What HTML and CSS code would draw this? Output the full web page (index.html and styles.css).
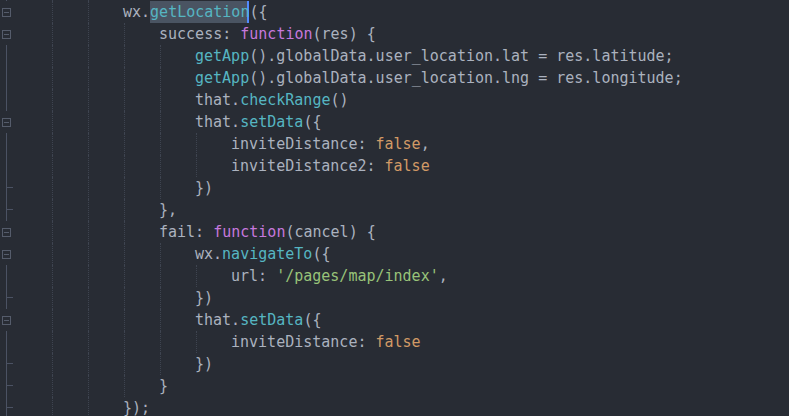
FILE: index.html
```html
<!DOCTYPE html>
<html>
<head>
<meta charset="utf-8">
<link rel="stylesheet" href="styles.css">
</head>
<body>
<div class="editor">
  <div class="line"><div class="gut"><i class="vl"></i></div><div class="code"><span class="lv"></span><span class="lv g"></span><span class="lv g"></span></div></div>
  <div class="line"><div class="gut"><i class="fold"></i></div><div class="code"><span class="lv"></span><span class="lv g"></span><span class="lv g"></span><span class="t">wx.<span class="sel fn">getLocation</span>({</span></div></div>
  <div class="line"><div class="gut"><i class="fold"></i></div><div class="code"><span class="lv"></span><span class="lv g"></span><span class="lv g"></span><span class="lv g"></span><span class="t">success: <span class="kw">function</span>(res) {</span></div></div>
  <div class="line"><div class="gut"><i class="vl"></i></div><div class="code"><span class="lv"></span><span class="lv g"></span><span class="lv g"></span><span class="lv g"></span><span class="lv g"></span><span class="t"><span class="fn">getApp</span>().globalData.user_location.lat = res.latitude;</span></div></div>
  <div class="line"><div class="gut"><i class="vl"></i></div><div class="code"><span class="lv"></span><span class="lv g"></span><span class="lv g"></span><span class="lv g"></span><span class="lv g"></span><span class="t"><span class="fn">getApp</span>().globalData.user_location.lng = res.longitude;</span></div></div>
  <div class="line"><div class="gut"><i class="vl"></i></div><div class="code"><span class="lv"></span><span class="lv g"></span><span class="lv g"></span><span class="lv g"></span><span class="lv g"></span><span class="t">that.<span class="fn">checkRange</span>()</span></div></div>
  <div class="line"><div class="gut"><i class="fold"></i></div><div class="code"><span class="lv"></span><span class="lv g"></span><span class="lv g"></span><span class="lv g"></span><span class="lv g"></span><span class="t">that.<span class="fn">setData</span>({</span></div></div>
  <div class="line"><div class="gut"><i class="vl"></i></div><div class="code"><span class="lv"></span><span class="lv g"></span><span class="lv g"></span><span class="lv g"></span><span class="lv g"></span><span class="lv g"></span><span class="t">inviteDistance: <span class="bool">false</span>,</span></div></div>
  <div class="line"><div class="gut"><i class="vl"></i></div><div class="code"><span class="lv"></span><span class="lv g"></span><span class="lv g"></span><span class="lv g"></span><span class="lv g"></span><span class="lv g"></span><span class="t">inviteDistance2: <span class="bool">false</span></span></div></div>
  <div class="line"><div class="gut"><i class="vl tick"></i></div><div class="code"><span class="lv"></span><span class="lv g"></span><span class="lv g"></span><span class="lv g"></span><span class="lv g"></span><span class="t">})</span></div></div>
  <div class="line"><div class="gut"><i class="vl tick"></i></div><div class="code"><span class="lv"></span><span class="lv g"></span><span class="lv g"></span><span class="lv g"></span><span class="t">},</span></div></div>
  <div class="line"><div class="gut"><i class="fold"></i></div><div class="code"><span class="lv"></span><span class="lv g"></span><span class="lv g"></span><span class="lv g"></span><span class="t">fail: <span class="kw">function</span>(cancel) {</span></div></div>
  <div class="line"><div class="gut"><i class="fold"></i></div><div class="code"><span class="lv"></span><span class="lv g"></span><span class="lv g"></span><span class="lv g"></span><span class="lv g"></span><span class="t">wx.<span class="fn">navigateTo</span>({</span></div></div>
  <div class="line"><div class="gut"><i class="vl"></i></div><div class="code"><span class="lv"></span><span class="lv g"></span><span class="lv g"></span><span class="lv g"></span><span class="lv g"></span><span class="lv g"></span><span class="t">url: <span class="str">'/pages/map/index'</span>,</span></div></div>
  <div class="line"><div class="gut"><i class="vl tick"></i></div><div class="code"><span class="lv"></span><span class="lv g"></span><span class="lv g"></span><span class="lv g"></span><span class="lv g"></span><span class="t">})</span></div></div>
  <div class="line"><div class="gut"><i class="fold"></i></div><div class="code"><span class="lv"></span><span class="lv g"></span><span class="lv g"></span><span class="lv g"></span><span class="lv g"></span><span class="t">that.<span class="fn">setData</span>({</span></div></div>
  <div class="line"><div class="gut"><i class="vl"></i></div><div class="code"><span class="lv"></span><span class="lv g"></span><span class="lv g"></span><span class="lv g"></span><span class="lv g"></span><span class="lv g"></span><span class="t">inviteDistance: <span class="bool">false</span></span></div></div>
  <div class="line"><div class="gut"><i class="vl tick"></i></div><div class="code"><span class="lv"></span><span class="lv g"></span><span class="lv g"></span><span class="lv g"></span><span class="lv g"></span><span class="t">})</span></div></div>
  <div class="line"><div class="gut"><i class="vl tick"></i></div><div class="code"><span class="lv"></span><span class="lv g"></span><span class="lv g"></span><span class="lv g"></span><span class="t">}</span></div></div>
  <div class="line"><div class="gut"><i class="vl tick"></i></div><div class="code"><span class="lv"></span><span class="lv g"></span><span class="lv g"></span><span class="t">});</span></div></div>
</div>
</body>
</html>
```
FILE: styles.css
```css
html, body {
  margin: 0;
  padding: 0;
  background: #282c34;
  overflow: hidden;
}
body {
  width: 789px;
  height: 416px;
}
.editor {
  margin-top: -21px;
  font-family: "DejaVu Sans Mono", "Liberation Mono", monospace;
  font-size: 15px;
  line-height: 22px;
  color: #abb2bf;
}
.line {
  display: flex;
  height: 22px;
}
.gut {
  width: 15px;
  flex: none;
  display: flex;
  flex-direction: column;
}
.vl {
  display: block;
  width: 7px;
  height: 22px;
  margin-left: 6px;
  border-left: 1px solid #4b5263;
  box-sizing: border-box;
}
.tick {
  background: linear-gradient(#4b5263, #4b5263) no-repeat 0 10px / 7px 1px;
}
.fold {
  display: block;
  width: 9px;
  height: 9px;
  margin: 7px 0 0 2px;
  border: 1px solid #555c6b;
  box-sizing: border-box;
  background: linear-gradient(#555c6b, #555c6b) no-repeat 1px 3px / 5px 1px;
}
.code {
  display: flex;
  white-space: pre;
}
.lv {
  display: block;
  width: 36px;
  height: 22px;
  flex: none;
  box-sizing: border-box;
}
.lv.g {
  margin-left: 1px;
  width: 35px;
  border-left: 1px dotted #3e4450;
}
.t {
  display: block;
}
.sel {
  display: inline-block;
  height: 22px;
  vertical-align: top;
  background: #4a5462;
  box-shadow: inset -2px 0 0 #528bff;
}
.fn { color: #56b6c2; }
.kw { color: #c678dd; }
.bool { color: #d19a66; }
.str { color: #98c379; }
```
